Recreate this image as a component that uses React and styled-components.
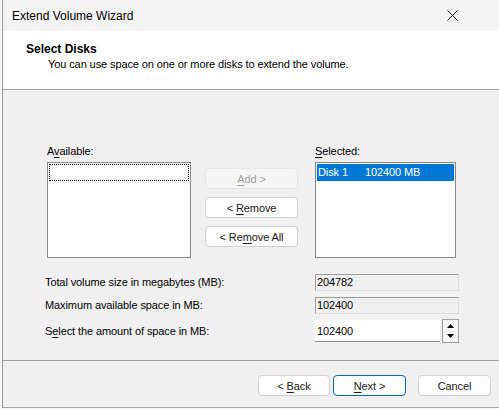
import React from "react";
import styled, { createGlobalStyle } from "styled-components";

const Global = createGlobalStyle`
  html, body { margin: 0; padding: 0; background: #f7f7f7; }
  body { font-family: "Liberation Sans", Arial, sans-serif; font-size: 11px; letter-spacing: -0.1px; color: #000; }
  * { box-sizing: border-box; }
`;

const Screen = styled.div`
  width: 499px;
  height: 409px;
  display: flex;
  overflow: hidden;
  background: #f4f6f8;
`;

const Window = styled.div`
  margin-left: 2px;
  flex: 1;
  height: 408px;
  border-left: 1px solid #9a9a9a;
  border-bottom: 1px solid #a8a8a8;
  display: flex;
  flex-direction: column;
  background: #f0f0f0;
`;

const TitleBar = styled.div`
  height: 31px;
  flex: none;
  display: flex;
  align-items: center;
  justify-content: space-between;
  padding-left: 9px;
  background: #f3f3f3;
  font-size: 12px;
  letter-spacing: 0;
`;

const CloseBox = styled.div`
  width: 46px;
  height: 31px;
  margin-right: 24px;
  display: flex;
  align-items: center;
  justify-content: center;
`;

const Header = styled.div`
  height: 59px;
  flex: none;
  background: #fff;
  border-bottom: 1px solid #a0a0a0;
  padding: 11px 0 0 23px;
  line-height: 15px;
`;

const HeaderTitle = styled.div`
  font-weight: bold;
  font-size: 12px;
  letter-spacing: 0;
`;

const HeaderSub = styled.div`
  padding-left: 22px;
`;

const Body = styled.div`
  flex: 1;
  padding: 54px 0 0 42px;
  border-bottom: 1px solid #a0a0a0;
`;

const Lists = styled.div`
  display: grid;
  grid-template-columns: 144px 93px 144px;
  column-gap: 14px;
  padding-left: 2px;
`;

const ListColumn = styled.div`
  display: flex;
  flex-direction: column;
  gap: 3px;
  ${(p) => p.$right && "margin-left: 3px;"}
`;

const Label = styled.div`
  line-height: 15px;
  height: 15px;
  white-space: nowrap;
`;

const ListBox = styled.div`
  height: 96px;
  background: #fff;
  border: 1px solid #828790;
  padding: 1px;
`;

const FocusItem = styled.div`
  height: 17px;
  border: 1px dotted #000;
`;

const SelectedItem = styled.div`
  height: 17px;
  background: #0078d7;
  color: #fff;
  display: flex;
  align-items: center;
  padding-left: 1px;
  gap: 17px;
  line-height: 15px;
`;

const ButtonColumn = styled.div`
  display: flex;
  flex-direction: column;
  gap: 8px;
  padding-top: 24px;
`;

const Button = styled.div`
  height: 21px;
  width: ${(p) => p.$w || 93}px;
  display: flex;
  align-items: center;
  justify-content: center;
  border-radius: 4px;
  border: 1px solid ${(p) => (p.$default ? "#0067c0" : p.$disabled ? "#e5e5e5" : "#d0d0d0")};
  background: ${(p) => (p.$disabled ? "#f5f5f5" : "#fdfdfd")};
  color: ${(p) => (p.$disabled ? "#a0a0a0" : "#1a1a1a")};
  white-space: pre;
`;

const Rows = styled.div`
  display: grid;
  grid-template-columns: 270px 144px;
  grid-template-rows: 17px 17px 22px;
  row-gap: 6px;
  margin-top: 16px;
  align-items: center;
`;

const RowLabel = styled.div`
  line-height: 15px;
`;

const ReadOnlyField = styled.div`
  height: 17px;
  border: 1px solid;
  border-color: #a0a0a0 #dcdcdc #dcdcdc #a0a0a0;
  background: #f0f0f0;
  padding-left: 1px;
  line-height: 15px;
`;

const SpinRow = styled.div`
  display: flex;
  align-items: center;
  height: 22px;
`;

const SpinInput = styled.div`
  width: 127px;
  height: 22px;
  background: #fff;
  border-bottom: 1px solid #8a8a8a;
  padding-left: 2px;
  display: flex;
  align-items: center;
`;

const Spinner = styled.div`
  margin-left: 2px;
  width: 17px;
  height: 24px;
  border: 1px solid #a0a0a0;
  background: #f0f0f0;
  display: flex;
  flex-direction: column;
  gap: 1px;
  padding: 1px;
`;

const SpinBtn = styled.div`
  flex: 1;
  background: #fbfbfb;
  display: flex;
  align-items: center;
  justify-content: center;
`;

const Footer = styled.div`
  height: 46px;
  flex: none;
  display: flex;
  justify-content: flex-end;
  align-items: flex-start;
  padding: 14px 8px 0 0;
`;

const FooterGroup = styled.div`
  display: flex;
  gap: 3px;
  margin-right: 12px;
`;

const Key = styled.span`
  text-decoration: underline;
  text-underline-offset: 2px;
`;

export default function App() {
  return (
    <Screen>
      <Global />
      <Window>
        <TitleBar>
          <span>Extend Volume Wizard</span>
          <CloseBox>
            <svg width="11" height="11" viewBox="0 0 11 11">
              <path d="M0.5 0.5 L10.5 10.5 M10.5 0.5 L0.5 10.5" stroke="#1a1a1a" strokeWidth="1" />
            </svg>
          </CloseBox>
        </TitleBar>
        <Header>
          <HeaderTitle>Select Disks</HeaderTitle>
          <HeaderSub>You can use space on one or more disks to extend the volume.</HeaderSub>
        </Header>
        <Body>
          <Lists>
            <ListColumn>
              <Label>
                A<Key>v</Key>ailable:
              </Label>
              <ListBox>
                <FocusItem />
              </ListBox>
            </ListColumn>
            <ButtonColumn>
              <Button $disabled>
                <Key>A</Key>
                {"dd >"}
              </Button>
              <Button>
                {"< "}
                <Key>R</Key>
                {"emove"}
              </Button>
              <Button>
                {"< Re"}
                <Key>m</Key>
                {"ove All"}
              </Button>
            </ButtonColumn>
            <ListColumn $right>
              <Label>
                <Key>S</Key>elected:
              </Label>
              <ListBox>
                <SelectedItem>
                  <span>Disk 1</span>
                  <span>102400 MB</span>
                </SelectedItem>
              </ListBox>
            </ListColumn>
          </Lists>
          <Rows>
            <RowLabel>Total volume size in megabytes (MB):</RowLabel>
            <ReadOnlyField>204782</ReadOnlyField>
            <RowLabel>Maximum available space in MB:</RowLabel>
            <ReadOnlyField>102400</ReadOnlyField>
            <RowLabel>
              S<Key>e</Key>lect the amount of space in MB:
            </RowLabel>
            <SpinRow>
              <SpinInput>102400</SpinInput>
              <Spinner>
                <SpinBtn>
                  <svg width="7" height="4" viewBox="0 0 7 4">
                    <path d="M3.5 0 L7 4 L0 4 Z" fill="#000" />
                  </svg>
                </SpinBtn>
                <SpinBtn>
                  <svg width="7" height="4" viewBox="0 0 7 4">
                    <path d="M0 0 L7 0 L3.5 4 Z" fill="#000" />
                  </svg>
                </SpinBtn>
              </Spinner>
            </SpinRow>
          </Rows>
        </Body>
        <Footer>
          <FooterGroup>
            <Button $w={72}>
              {"< "}
              <Key>B</Key>
              {"ack"}
            </Button>
            <Button $w={73} $default>
              <Key>N</Key>
              {"ext >"}
            </Button>
          </FooterGroup>
          <Button $w={73}>Cancel</Button>
        </Footer>
      </Window>
    </Screen>
  );
}
